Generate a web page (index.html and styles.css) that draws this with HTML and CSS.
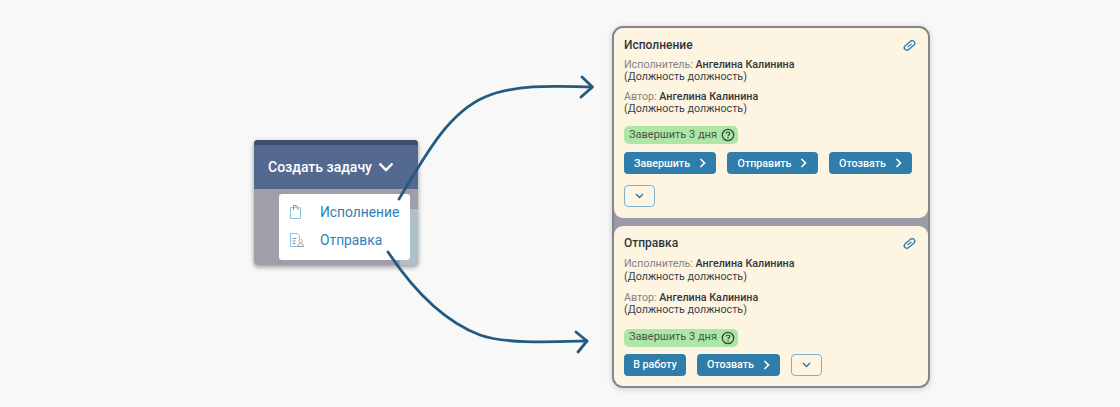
FILE: index.html
```html
<!DOCTYPE html>
<html lang="ru">
<head>
<meta charset="utf-8">
<title>Создать задачу</title>
<link rel="stylesheet" href="styles.css">
</head>
<body>
<main class="canvas">
  <section class="widget">
    <div class="widget-head">
      <span>Создать задачу</span>
      <svg class="head-chevron" width="16" height="10" viewBox="0 0 16 10"><path d="M1.500 1.500 8 8l6.500-6.500" fill="none" stroke="#fff" stroke-width="2.400"/></svg>
    </div>
    <div class="widget-body">
      <div class="widget-strip"></div>
      <div class="widget-foot"></div>
      <ul class="menu">
        <li class="menu-item">
          <svg width="14" height="16" viewBox="0 0 14 16" fill="none"><path d="M3.500 3.500H1.500v11h10v-11h-1" stroke="#8fc0de"/><path d="M4.500 6V1.500h3l1.500 1.500V6" stroke="#5d9cc6"/><path d="M5 3.500h3.500" stroke="#d9a58a"/></svg>
          <span>Исполнение</span>
        </li>
        <li class="menu-item">
          <svg width="16" height="16" viewBox="0 0 16 16" fill="none"><path d="M8 14.500H1.500v-13h7l2 2V7" stroke="#8fc0de"/><path d="M3.500 6.500h4M3.500 9h3M3.500 11.500h3" stroke="#5d9cc6"/><circle cx="11.500" cy="9" r="1.700" stroke="#d9a58a"/><path d="M8.500 14.500c.2-2 1.400-3 3-3s2.800 1 3 3z" stroke="#8a9fb4"/></svg>
          <span>Отправка</span>
        </li>
      </ul>
    </div>
  </section>

  <section class="stack">
    <article class="card card-first">
      <header class="card-head">
        <h2>Исполнение</h2>
        <svg class="clip" width="13" height="11" viewBox="0 0 13 11" fill="none"><rect x=".5" y="3" width="12" height="5" rx="2.500" transform="rotate(-40 6.500 5.500)" stroke="#2f80b5" stroke-width="1.400"/><path d="M4.500 7 8.500 4" stroke="#2f80b5" stroke-width="1.100"/></svg>
      </header>
      <p class="person"><span class="muted">Исполнитель:</span> <b>Ангелина Калинина</b><br>(Должность должность)</p>
      <p class="person"><span class="muted">Автор:</span> <b>Ангелина Калинина</b><br>(Должность должность)</p>
      <div class="badge">Завершить 3 дня
        <svg width="14" height="14" viewBox="0 0 14 14" fill="none"><circle cx="7" cy="7" r="5.700" stroke="#33493a" stroke-width="1.300"/><path d="M5.200 5.600c0-1 .8-1.600 1.800-1.600s1.800.6 1.800 1.500c0 1.300-1.800 1.300-1.800 2.700" stroke="#33493a" stroke-width="1.200"/><circle cx="7" cy="10" r=".8" fill="#33493a"/></svg>
      </div>
      <div class="actions">
        <button class="btn btn-1">Завершить <svg class="chev" width="7" height="10" viewBox="0 0 7 10"><path d="M1.500 1 5.500 5l-4 4" fill="none" stroke="#fff" stroke-width="1.600"/></svg></button>
        <button class="btn btn-2">Отправить <svg class="chev" width="7" height="10" viewBox="0 0 7 10"><path d="M1.500 1 5.500 5l-4 4" fill="none" stroke="#fff" stroke-width="1.600"/></svg></button>
        <button class="btn btn-3">Отозвать <svg class="chev" width="7" height="10" viewBox="0 0 7 10"><path d="M1.500 1 5.500 5l-4 4" fill="none" stroke="#fff" stroke-width="1.600"/></svg></button>
      </div>
      <button class="more more-own"><svg width="9" height="6" viewBox="0 0 9 6"><path d="M1 1l3.500 3.500L8 1" fill="none" stroke="#2f6f9e" stroke-width="1.300"/></svg></button>
    </article>
    <article class="card card-second">
      <header class="card-head">
        <h2>Отправка</h2>
        <svg class="clip" width="13" height="11" viewBox="0 0 13 11" fill="none"><rect x=".5" y="3" width="12" height="5" rx="2.500" transform="rotate(-40 6.500 5.500)" stroke="#2f80b5" stroke-width="1.400"/><path d="M4.500 7 8.500 4" stroke="#2f80b5" stroke-width="1.100"/></svg>
      </header>
      <p class="person"><span class="muted">Исполнитель:</span> <b>Ангелина Калинина</b><br>(Должность должность)</p>
      <p class="person"><span class="muted">Автор:</span> <b>Ангелина Калинина</b><br>(Должность должность)</p>
      <div class="badge">Завершить 3 дня
        <svg width="14" height="14" viewBox="0 0 14 14" fill="none"><circle cx="7" cy="7" r="5.700" stroke="#33493a" stroke-width="1.300"/><path d="M5.200 5.600c0-1 .8-1.600 1.800-1.600s1.800.6 1.800 1.500c0 1.300-1.800 1.300-1.800 2.700" stroke="#33493a" stroke-width="1.200"/><circle cx="7" cy="10" r=".8" fill="#33493a"/></svg>
      </div>
      <div class="actions">
        <button class="btn btn-4">В работу</button>
        <button class="btn btn-3">Отозвать <svg class="chev" width="7" height="10" viewBox="0 0 7 10"><path d="M1.500 1 5.500 5l-4 4" fill="none" stroke="#fff" stroke-width="1.600"/></svg></button>
        <button class="more"><svg width="9" height="6" viewBox="0 0 9 6"><path d="M1 1l3.500 3.500L8 1" fill="none" stroke="#2f6f9e" stroke-width="1.300"/></svg></button>
      </div>
    </article>
  </section>

  <svg class="arrows" width="1120" height="407" viewBox="0 0 1120 407" fill="none">
    <path d="M399 199C428 150 450 112 485 97C515 84 555 86 591 87" stroke="#245a80" stroke-width="2.800" stroke-linecap="round"/>
    <path d="M582 77 592.500 87 581 97" stroke="#245a80" stroke-width="2.800" stroke-linecap="round" stroke-linejoin="round"/>
    <path d="M388 252C410 285 440 320 480 335C505 344 550 342 587 341" stroke="#245a80" stroke-width="2.800" stroke-linecap="round"/>
    <path d="M576 332 587 341 578 352" stroke="#245a80" stroke-width="2.800" stroke-linecap="round" stroke-linejoin="round"/>
  </svg>
</main>
</body>
</html>
```
FILE: styles.css
```css
* { box-sizing: border-box; }
html, body { margin: 0; height: 100%; }
body {
  background: #f8f8f8;
  font-family: Roboto, "Liberation Sans", sans-serif;
  overflow: hidden;
}
.canvas {
  position: relative;
  width: 1120px;
  height: 407px;
  overflow: hidden;
}
.widget {
  position: absolute;
  left: 254px;
  top: 140px;
  width: 164px;
  height: 125px;
  display: flex;
  flex-direction: column;
  border-radius: 4px;
  overflow: hidden;
  box-shadow: 0 2px 5px rgba(0, 0, 0, .4);
  background: #9f9fac;
}
.widget-head {
  height: 49px;
  flex: none;
  background: #54698f;
  border-top: 5px solid #3f4e6d;
  padding-left: 14px;
  display: flex;
  align-items: center;
  gap: 6px;
  color: #fff;
  font-size: 14px;
  font-weight: 500;
}
.head-chevron { margin-top: -1px; }
.widget-body { position: relative; flex: 1; }
.widget-strip {
  position: absolute;
  right: 0;
  top: 20px;
  bottom: 0;
  width: 8px;
  background: #afc0cd;
}
.widget-foot {
  position: absolute;
  right: 0;
  bottom: 0;
  width: 18px;
  height: 5px;
  background: #afc0cd;
}
.menu {
  list-style: none;
  position: relative;
  margin: 5px 8px 0 25px;
  padding: 4px 0 0;
  height: 66px;
  background: #fff;
  border-radius: 3px;
}
.menu-item {
  height: 28px;
  display: flex;
  align-items: center;
  color: #2f80b5;
  font-size: 13.800px;
}
.menu-item svg { margin-left: 10px; flex: none; }
.menu-item span { position: absolute; left: 41px; }
.stack {
  position: absolute;
  left: 612px;
  top: 26px;
  width: 318px;
  height: 362px;
  border: 2px solid #85858f;
  border-radius: 11px;
  background: #9b9ba8;
  box-shadow: 0 1px 6px rgba(0, 0, 0, .18);
  display: flex;
  flex-direction: column;
  gap: 8px;
}
.card {
  background: #fdf5e2;
  border-radius: 9px;
  padding: 9px 12px 0 10px;
  color: #3a4149;
  font-size: 10.700px;
  line-height: 12px;
}
.card-first { height: 190px; }
.card-second { flex: 1; line-height: 12.500px; }
.card-head {
  display: flex;
  justify-content: space-between;
  align-items: center;
  height: 16px;
  margin-bottom: 6px;
}
.card-second .card-head { margin-bottom: 7px; }
h2 {
  margin: 0;
  font-size: 12px;
  font-weight: 500;
  color: #2f363d;
}
.person { margin: 0 0 8px; }
.card-second .person { margin-bottom: 8.500px; }
.muted { color: #808488; }
.person b { font-weight: 500; color: #30363d; }
.badge {
  margin-top: 11px;
  height: 18px;
  width: 114px;
  background: #aee6a6;
  border-radius: 5px;
  display: flex;
  align-items: center;
  justify-content: space-between;
  padding: 0 3px 0 5px;
  color: #44574a;
  font-size: 11px;
}
.card-second .badge { margin-top: 12px; }
.actions {
  display: flex;
  margin-top: 8px;
  gap: 11px;
}
.card-second .actions { margin-top: 7px; }
.btn {
  height: 22px;
  border: 0;
  padding: 0;
  border-radius: 4px;
  background: #2e7dab;
  color: #fff;
  font: 500 10.700px Roboto, "Liberation Sans", sans-serif;
  display: flex;
  align-items: center;
  justify-content: center;
  gap: 6px;
}
.chev { margin-left: 3px; }
.btn-1 { width: 92px; }
.btn-2 { width: 91px; }
.btn-3 { width: 83px; }
.btn-4 { width: 62px; }
.more {
  width: 31px;
  height: 22px;
  padding: 0;
  border: 1px solid #7fb0cd;
  border-radius: 4px;
  background: transparent;
  display: flex;
  align-items: center;
  justify-content: center;
}
.more-own { margin-top: 11px; }
.arrows {
  position: absolute;
  left: 0;
  top: 0;
  pointer-events: none;
}
```
